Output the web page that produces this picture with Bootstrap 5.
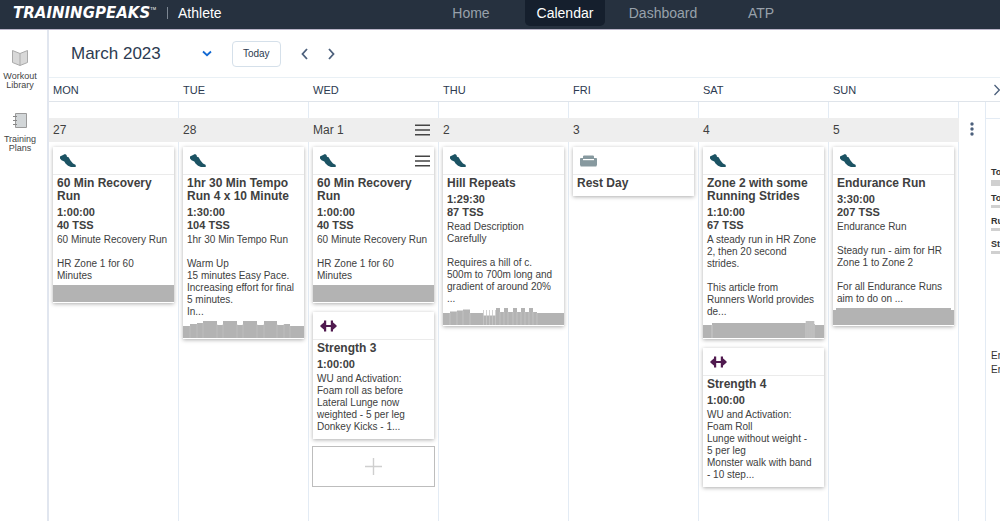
<!DOCTYPE html>
<html lang="en">
<head>
<meta charset="utf-8">
<meta name="viewport" content="width=device-width, initial-scale=1">
<title>TrainingPeaks Calendar</title>
<link href="https://cdn.jsdelivr.net/npm/bootstrap@5.3.0/dist/css/bootstrap.min.css" rel="stylesheet">
<style>
  body { font-family: "Liberation Sans", Arial, sans-serif; font-size: 11px; line-height: 12px; color: #404040; background: #fff; overflow-x: hidden; }
  button { color: inherit; }
  svg { display: block; }
  .topbar { height: 30px; background: #26313f; border-bottom: 1px solid #b9b4c8; padding: 0 0 4px 13px; font-size: 14px; line-height: 16px; }
  .brand { font: italic bold 15px/16px "DejaVu Sans", sans-serif; color: #fff; text-decoration: none; }
  .brand-tm { font-size: 4px; line-height: 4px; color: #fff; align-self: flex-start; padding-top: 7px; }
  .brand-rule { width: 1px; height: 12px; background: #7d8793; margin: 0 10px 0 11px; }
  .main-tabs { display: grid; grid-template-columns: 90px 98px 98px 98px; margin-left: auto; margin-right: 190px; justify-items: center; }
  .main-tabs a { color: #98a1ab; text-decoration: none; padding: 5px 12px; border-radius: 0 0 5px 5px; }
  .main-tabs a.active { color: #fff; background: #151f2d; }
  .rail { width: 49px; flex: none; gap: 22px; border-right: 2px solid #e1e6ef; padding: 19px 7px 0 0; font-size: 9px; line-height: 9px; }
  .rail a { color: #444; text-decoration: none; text-align: center; gap: 6px; }
  .content { min-width: 0; }
  .toolbar { height: 48px; border-bottom: 1px solid #e9f0f5; color: #2c3a50; padding-left: 22px; gap: 20px; }
  .month-title { font-size: 17px; line-height: 20px; margin: 0 21px 0 0; font-weight: 400; }
  .icon-btn { background: none; border: 0; padding: 0; }
  .today-btn { width: 49px; height: 26px; padding: 0; font-size: 10px; line-height: 12px; color: #2c3a50; border: 1px solid #d5e0ea; border-radius: 4px; background: #fff; }
  .cal-grid { display: grid; grid-template-columns: repeat(7, minmax(0, 1fr)) 27px 14px; }
  .weekdays { height: 24px; border-bottom: 1px solid #dfe4ea; color: #2c3a50; }
  .weekdays span { padding-left: 4px; }
  .day { border-right: 1px solid #e3ebf4; padding-top: 16px; }
  .day-head { height: 24px; background: #eee; margin-right: -1px; padding: 0 9px 0 4px; font-size: 12px; margin-bottom: 5px; position: relative; }
  .day-body { padding: 0 4px; display: flex; flex-direction: column; gap: 9px; }
  .workout { background: #fff; box-shadow: 0 1px 4px rgba(0,0,0,.32); padding-bottom: 6px; }
  .workout.has-graph { padding-bottom: 1px; }
  .workout-top { height: 28px; border-bottom: 1px solid #ebebeb; padding: 0 4px 0 7px; }
  .workout-text { padding: 2px 0 0 4px; }
  .workout h2 { font-size: 12px; line-height: 13px; font-weight: 700; margin: 0; }
  .stats { font-weight: 700; line-height: 13px; margin: 3px 0 2px; }
  .notes { font-size: 10px; line-height: 12px; white-space: pre-line; margin: 0; }
  .graph { width: 100%; height: 17px; margin-top: 3px; fill: #b3b3b3; }
  .add-btn { height: 41px; margin: -2px -1px 0; background: #fff; border: 1px solid #bdbdbd; padding: 0; }
  .menu-col { border-right: 1px solid #e3ebf4; padding-top: 20px; }
  .summary { overflow: hidden; white-space: nowrap; margin-top: 16px; border-top: 1px solid #e3ebf4; padding: 47px 0 0 5px; }
  .sum-row { height: 23px; font-weight: 700; font-size: 9px; line-height: 12px; color: #333; }
  .sum-row:first-child { height: 26px; }
  .sum-bar { height: 3px; background: #d0d0d0; margin-top: 1px; }
  .sum-row:first-child .sum-bar { height: 6px; margin-top: 2px; }
  .sum-notes { margin-top: 88px; font-size: 10px; line-height: 14px; color: #333; }
</style>
</head>
<body class="d-flex flex-column min-vh-100">

<svg width="0" height="0" class="position-absolute" aria-hidden="true">
  <symbol id="shoe" viewBox="0 0 16 13"><path fill="#1c5363" d="M0 2.600 2 1.600 5 0 6.500 1 7 2.800 8.600 3.200 10.500 6.600 13 9.600 15.500 10.800 16 12.400 15 13H11L8 11.800 5.500 9.400 4.300 7.500 1.500 6.200 0 4.600Z"/></symbol>
  <symbol id="dumbbell" viewBox="0 0 17 12"><path fill="#501a4f" d="M0 6 1.500 4.400 3.500 2.800 4 2.600V.6H6.200V4.900H10.800V.6H13V2.600L13.500 2.800 15.500 4.400 17 6 15.500 7.600 13.500 9.200 13 9.400V11.400H10.800V7.100H6.200V11.400H4V9.400L3.500 9.200 1.500 7.600Z"/></symbol>
  <symbol id="couch" viewBox="0 0 17 12"><path fill="#87999f" d="M3 3V1.6Q3 .5 4.200.5H12.800Q14 .5 14 1.600V3H16.200Q17 3 17 4V10.400H16.400V11.400H.6V10.400H0V4Q0 3 .8 3Z"/><path fill="#fff" d="M3 4H14V5.200H3Z"/></symbol>
  <symbol id="bars" viewBox="0 0 15 12"><path fill="#444" d="M0 .5H15V2H0ZM0 5.300H15V6.800H0ZM0 10H15V11.500H0Z"/></symbol>
</svg>

<header class="topbar d-flex align-items-center">
  <a href="#" class="brand">TRAININGPEAKS</a><span class="brand-tm">TM</span>
  <span class="brand-rule"></span>
  <span class="text-white">Athlete</span>
  <nav class="main-tabs" aria-label="Main">
    <a href="#">Home</a>
    <a href="#" class="active" aria-current="page">Calendar</a>
    <a href="#">Dashboard</a>
    <a href="#">ATP</a>
  </nav>
</header>

<div class="d-flex flex-grow-1">
  <aside class="rail d-flex flex-column align-items-center">
    <a href="#" class="d-flex flex-column align-items-center">
      <svg width="16" height="17" viewBox="0 0 16 17"><path fill="#d8d8d8" stroke="#aaa" d="M.5 1.500 8 4.500 15.500 1.500V13.500L8 16.500.5 13.500ZM8 4.500V16.500"/></svg>
      <span>Workout<br>Library</span>
    </a>
    <a href="#" class="d-flex flex-column align-items-center">
      <svg width="16" height="17" viewBox="0 0 16 17"><path fill="#d2d6d8" stroke="#9a9a9a" d="M3.500 1.500H14.500V15.500H3.500Z"/><path stroke="#888" d="M1 4.500H5M1 8.500H5M1 12.500H5"/></svg>
      <span>Training<br>Plans</span>
    </a>
  </aside>

  <main class="content flex-grow-1 d-flex flex-column">
    <div class="toolbar d-flex align-items-center">
      <h1 class="month-title">March 2023</h1>
      <button class="icon-btn" aria-label="Choose month"><svg width="10" height="7" viewBox="0 0 10 7"><path d="M1 1.500 5 5.200 9 1.500" fill="none" stroke="#1269d3" stroke-width="1.800"/></svg></button>
      <button class="today-btn">Today</button>
      <button class="icon-btn" aria-label="Previous"><svg width="7" height="12" viewBox="0 0 7 12"><path d="M6 1 1.500 6 6 11" fill="none" stroke="#4c607c" stroke-width="1.800"/></svg></button>
      <button class="icon-btn" aria-label="Next"><svg width="7" height="12" viewBox="0 0 7 12"><path d="M1 1 5.500 6 1 11" fill="none" stroke="#4c607c" stroke-width="1.800"/></svg></button>
    </div>

    <div class="weekdays cal-grid align-items-center">
      <span>MON</span><span>TUE</span><span>WED</span><span>THU</span><span>FRI</span><span>SAT</span><span>SUN</span><span></span>
      <button class="icon-btn ps-2" aria-label="Hide summary"><svg width="6" height="12" viewBox="0 0 6 12"><path d="M.5 1 5.300 6 .5 11" fill="none" stroke="#4c607c" stroke-width="1.300"/></svg></button>
    </div>

    <div class="cal-grid flex-grow-1">
      <section class="day">
        <div class="day-head d-flex align-items-center">27</div>
        <div class="day-body">
          <article class="workout has-graph">
            <div class="workout-top d-flex align-items-center"><svg width="16" height="13"><use href="#shoe"/></svg></div>
            <div class="workout-text"><h2>60 Min Recovery Run</h2><div class="stats">1:00:00<br>40 TSS</div>
<p class="notes">60 Minute Recovery Run

HR Zone 1 for 60
Minutes</p></div>
            <svg class="graph" viewBox="0 0 121 17" preserveAspectRatio="none"><path d="M0 0H121V17H0Z"/></svg>
          </article>
        </div>
      </section>

      <section class="day">
        <div class="day-head d-flex align-items-center">28</div>
        <div class="day-body">
          <article class="workout has-graph">
            <div class="workout-top d-flex align-items-center"><svg width="16" height="13"><use href="#shoe"/></svg></div>
            <div class="workout-text"><h2>1hr 30 Min Tempo Run 4 x 10 Minute</h2><div class="stats">1:30:00<br>104 TSS</div>
<p class="notes">1hr 30 Min Tempo Run

Warm Up
15 minutes Easy Pace.
Increasing effort for final
5 minutes.
In...</p></div>
            <svg class="graph" viewBox="0 0 121 17" preserveAspectRatio="none"><path d="M0 5H7V3H14V2H20V0H34V4H40V0H54V4H60V0H74V4H81V0H94V4H101V3H107V5H121V17H0Z"/><path fill="none" stroke="#c6c6c6" stroke-width=".6" d="M7 5V17M14 3V17M20 2V17M34 3V17M40 3V17M54 3V17M60 3V17M74 3V17M81 3V17M94 3V17M101 3V17M107 5V17"/></svg>
          </article>
        </div>
      </section>

      <section class="day">
        <div class="day-head d-flex align-items-center justify-content-between">Mar 1
          <button class="icon-btn" aria-label="Day menu"><svg width="15" height="12"><use href="#bars"/></svg></button></div>
        <div class="day-body">
          <article class="workout has-graph">
            <div class="workout-top d-flex align-items-center justify-content-between"><svg width="16" height="13"><use href="#shoe"/></svg>
              <button class="icon-btn" aria-label="Workout menu"><svg width="15" height="12"><use href="#bars"/></svg></button></div>
            <div class="workout-text"><h2>60 Min Recovery Run</h2><div class="stats">1:00:00<br>40 TSS</div>
<p class="notes">60 Minute Recovery Run

HR Zone 1 for 60
Minutes</p></div>
            <svg class="graph" viewBox="0 0 121 17" preserveAspectRatio="none"><path d="M0 0H121V17H0Z"/></svg>
          </article>
          <article class="workout">
            <div class="workout-top d-flex align-items-center"><svg width="17" height="12"><use href="#dumbbell"/></svg></div>
            <div class="workout-text"><h2>Strength 3</h2><div class="stats">1:00:00</div>
<p class="notes">WU and Activation:
Foam roll as before
Lateral Lunge now
weighted - 5 per leg
Donkey Kicks - 1...</p></div>
          </article>
          <button class="add-btn d-flex align-items-center justify-content-center" aria-label="Add workout"><svg width="17" height="17" viewBox="0 0 17 17"><path d="M8.500 0V17M0 8.500H17" stroke="#cfcfcf" stroke-width="1.400"/></svg></button>
        </div>
      </section>

      <section class="day">
        <div class="day-head d-flex align-items-center">2</div>
        <div class="day-body">
          <article class="workout has-graph">
            <div class="workout-top d-flex align-items-center"><svg width="16" height="13"><use href="#shoe"/></svg></div>
            <div class="workout-text"><h2>Hill Repeats</h2><div class="stats">1:29:30<br>87 TSS</div>
<p class="notes">Read Description
Carefully

Requires a hill of c.
500m to 700m long and
gradient of around 20%
...</p></div>
            <svg class="graph" viewBox="0 0 121 17" preserveAspectRatio="none"><path d="M0 5H7V3.500H14V2.500H20V1.500H27V5H40V7.500H53V0H57V4H61V0H65V4H70V0H74V4H78V0H82V4H86V0H90V4H94V5H121V17H0Z"/><path fill="none" stroke="#c6c6c6" stroke-width=".8" d="M7 5V17M14 4V17M20 3V17M27 5V17M40.500 2V17M43.500 2V17M46.500 2V17M49.500 2V17M52.500 2V17M57 4V17M61 4V17M65 4V17M70 4V17M74 4V17M78 4V17M82 4V17M86 4V17M90 4V17M94 5V17"/></svg>
          </article>
        </div>
      </section>

      <section class="day">
        <div class="day-head d-flex align-items-center">3</div>
        <div class="day-body">
          <article class="workout">
            <div class="workout-top d-flex align-items-center"><svg width="17" height="12"><use href="#couch"/></svg></div>
            <div class="workout-text"><h2>Rest Day</h2></div>
          </article>
        </div>
      </section>

      <section class="day">
        <div class="day-head d-flex align-items-center">4</div>
        <div class="day-body">
          <article class="workout has-graph">
            <div class="workout-top d-flex align-items-center"><svg width="16" height="13"><use href="#shoe"/></svg></div>
            <div class="workout-text"><h2>Zone 2 with some Running Strides</h2><div class="stats">1:10:00<br>67 TSS</div>
<p class="notes">A steady run in HR Zone
2, then 20 second
strides.

This article from
Runners World provides
de...</p></div>
            <svg class="graph" viewBox="0 0 121 17" preserveAspectRatio="none"><path d="M0 4H9V2H103V0H111V3H112V4H121V17H0Z"/><path fill="none" stroke="#d0d0d0" stroke-width=".8" d="M9 4V17M103 0V17M105 0V17M107 0V17M109 0V17M111 0V17"/></svg>
          </article>
          <article class="workout">
            <div class="workout-top d-flex align-items-center"><svg width="17" height="12"><use href="#dumbbell"/></svg></div>
            <div class="workout-text"><h2>Strength 4</h2><div class="stats">1:00:00</div>
<p class="notes">WU and Activation:
Foam Roll
Lunge without weight -
5 per leg
Monster walk with band
- 10 step...</p></div>
          </article>
        </div>
      </section>

      <section class="day">
        <div class="day-head d-flex align-items-center">5</div>
        <div class="day-body">
          <article class="workout has-graph">
            <div class="workout-top d-flex align-items-center"><svg width="16" height="13"><use href="#shoe"/></svg></div>
            <div class="workout-text"><h2>Endurance Run</h2><div class="stats">3:30:00<br>207 TSS</div>
<p class="notes">Endurance Run

Steady run - aim for HR
Zone 1 to Zone 2

For all Endurance Runs
aim to do on ...</p></div>
            <svg class="graph" viewBox="0 0 121 17" preserveAspectRatio="none"><path d="M0 2H3V0H118V2H121V17H0Z"/></svg>
          </article>
        </div>
      </section>

      <div class="menu-col d-flex justify-content-center align-items-start">
        <button class="icon-btn" aria-label="Week menu"><svg width="4" height="14" viewBox="0 0 4 14" fill="#4c607c"><circle cx="2" cy="2" r="1.700"/><circle cx="2" cy="7" r="1.700"/><circle cx="2" cy="12" r="1.700"/></svg></button>
      </div>

      <aside class="summary">
        <div class="sum-row">To<div class="sum-bar"></div></div>
        <div class="sum-row">To<div class="sum-bar"></div></div>
        <div class="sum-row">Ru<div class="sum-bar"></div></div>
        <div class="sum-row">St<div class="sum-bar"></div></div>
        <div class="sum-notes">En<br>En</div>
      </aside>
    </div>
  </main>
</div>

<script src="https://cdn.jsdelivr.net/npm/bootstrap@5.3.0/dist/js/bootstrap.bundle.min.js"></script>
</body>
</html>
